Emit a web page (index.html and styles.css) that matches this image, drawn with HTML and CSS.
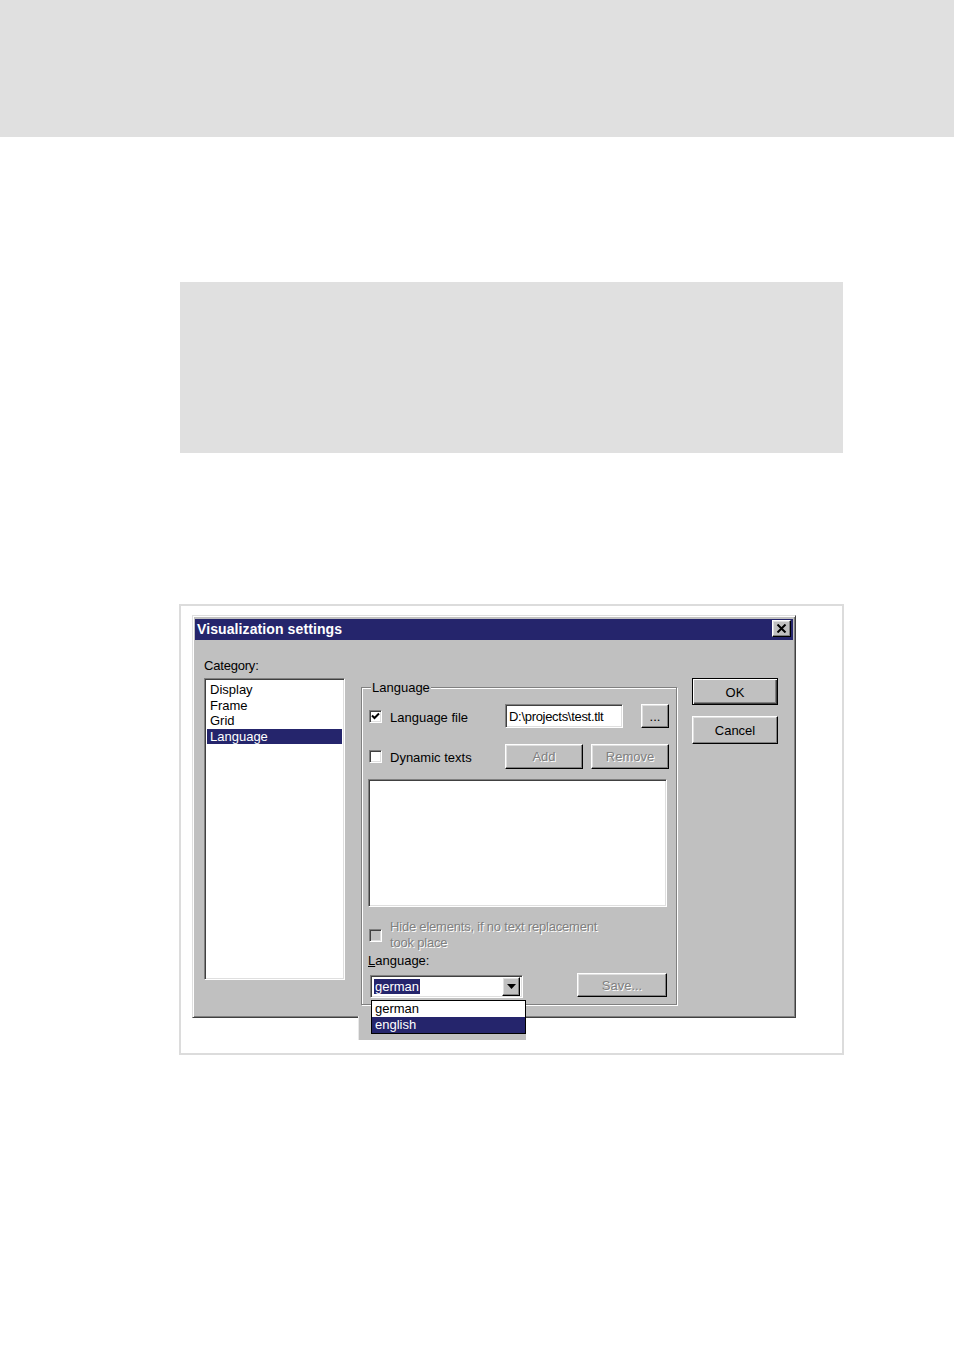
FILE: index.html
```html
<!DOCTYPE html>
<html>
<head>
<meta charset="utf-8">
<link rel="stylesheet" href="styles.css">
</head>
<body>
<div class="topband"></div>
<div class="graybox"></div>
<div class="frame">
  <div class="dialog">
    <div class="titlebar">
      <span class="title">Visualization settings</span>
      <span class="close raised"><svg width="11" height="9" viewBox="0 0 11 9"><path d="M1.5 0.5 L9.5 8.5 M9.5 0.5 L1.5 8.5" stroke="#000" stroke-width="2" fill="none"/></svg></span>
    </div>
    <div class="dbody">
      <div class="leftcol">
        <div class="lbl">Category:</div>
        <div class="catlist sunken">
          <div class="item">Display</div>
          <div class="item">Frame</div>
          <div class="item">Grid</div>
          <div class="item sel">Language</div>
        </div>
      </div>
      <div class="group">
        <span class="legend">Language</span>
        <div class="row r1">
          <div class="chkwrap"><span class="chk sunken"><svg width="9" height="9" viewBox="0 0 9 9"><path d="M1 3.5 L3.5 6 L8 1.5" stroke="#000" stroke-width="2" fill="none"/></svg></span><span>Language file</span></div>
          <div class="input sunken">D:\projects\test.tlt</div>
          <span class="spacer"></span>
          <div class="btn raised">...</div>
        </div>
        <div class="row r2">
          <div class="chkwrap"><span class="chk sunken"></span><span>Dynamic texts</span></div>
          <div class="btn raised disabled">Add</div>
          <span class="spacer2"></span>
          <div class="btn raised disabled">Remove</div>
        </div>
        <div class="biglist sunken"></div>
        <div class="hiderow">
          <span class="chk sunken grayed"></span>
          <span class="disabledtext hidetext">Hide elements, if no text replacement<br>took place</span>
        </div>
        <div class="langlbl"><u>L</u>anguage:</div>
        <div class="comborow">
          <div class="combo sunken">
            <span class="combotext"><span class="hl">german</span></span>
            <span class="dropbtn raised"><svg width="9" height="5" viewBox="0 0 9 5"><path d="M0 0 H9 L4.5 5 Z" fill="#000"/></svg></span>
          </div>
          <div class="btn raised disabled save">Save...</div>
        </div>
      </div>
      <div class="rightcol">
        <div class="btn raised okbtn">OK</div>
        <div class="btn raised cancelbtn">Cancel</div>
      </div>
    </div>
    <div class="dropshade"></div>
    <div class="droplist">
      <div class="ditem">german</div>
      <div class="ditem dsel">english</div>
    </div>
  </div>
</div>
</body>
</html>
```

FILE: styles.css
```css
* { box-sizing: border-box; }
html, body { margin: 0; padding: 0; background: #fff; }
body {
  width: 954px;
  height: 1350px;
  font-family: "Liberation Sans", Arial, sans-serif;
  font-size: 13px;
  color: #000;
}
.topband { height: 137px; background: #e0e0e0; }
.graybox {
  margin: 145px 0 0 180px;
  width: 663px;
  height: 171px;
  background: #e0e0e0;
}
.frame {
  margin: 151px 0 0 179px;
  width: 665px;
  height: 451px;
  border: 2px solid #dcdcdc;
  padding: 9px 0 0 11px;
}
.dialog {
  position: relative;
  width: 604px;
  height: 403px;
  background: #c0c0c0;
  border: 1px solid;
  border-color: #dfdfdf #404040 #404040 #dfdfdf;
  box-shadow: inset 1px 1px #fff, inset -1px -1px #808080;
  padding: 3px 2px 0 2px;
}
.raised {
  background: #c0c0c0;
  border: 1px solid;
  border-color: #fff #000 #000 #fff;
  box-shadow: inset -1px -1px #808080, inset 1px 1px #dfdfdf;
}
.sunken {
  background: #fff;
  border: 1px solid;
  border-color: #808080 #fff #fff #808080;
  box-shadow: inset 1px 1px #404040, inset -1px -1px #dfdfdf;
}
.titlebar {
  height: 21px;
  background: #25256c;
  display: flex;
  align-items: center;
  justify-content: space-between;
  padding: 0 2px 0 2px;
}
.title {
  color: #fff;
  font-weight: bold;
  font-size: 14px;
  letter-spacing: 0.1px;
  margin-top: -2px;
}
.close {
  width: 19px;
  height: 17px;
  display: flex;
  align-items: center;
  justify-content: center;
  margin-top: -2px;
}
.dbody {
  display: flex;
  align-items: flex-start;
  padding: 18px 0 0 9px;
}
.leftcol { width: 141px; }
.lbl { line-height: 16px; height: 16px; letter-spacing: -0.2px; }
.catlist {
  margin-top: 4px;
  height: 302px;
  padding: 3px 2px 2px 2px;
}
.item {
  height: 15.6px;
  line-height: 15.6px;
  padding-left: 3px;
  white-space: nowrap;
}
.item.sel { background: #25256c; color: #fff; }

.group {
  position: relative;
  margin: 29px 0 0 16px;
  width: 316px;
  height: 318px;
  border: 1px solid #808080;
  box-shadow: inset 1px 1px #fff, 1px 1px #fff;
  padding: 16px 0 0 7px;
}
.legend {
  position: absolute;
  top: -8px;
  left: 9px;
  padding: 0 1px;
  line-height: 16px;
  background: #c0c0c0;
}
.row { display: flex; align-items: center; }
.r1 { height: 24px; }
.r2 { height: 25px; margin-top: 16px; }
.chkwrap {
  width: 136px;
  display: flex;
  align-items: center;
  gap: 8px;
  white-space: nowrap;
}
.chkwrap span + span { padding-top: 2px; }
.chk {
  width: 13px;
  height: 13px;
  flex: none;
  display: flex;
  align-items: center;
  justify-content: center;
}
.chk.grayed { background: #c0c0c0; }
.input {
  width: 118px;
  height: 24px;
  line-height: 20px;
  padding: 2px 0 0 3px;
  white-space: nowrap;
  overflow: hidden;
  letter-spacing: -0.3px;
}
.spacer { width: 18px; }
.spacer2 { width: 8px; }
.btn {
  display: flex;
  align-items: center;
  justify-content: center;
  height: 24px;
  width: 28px;
  flex: none;
  padding-top: 1px;
}
.r2 .btn { width: 78px; height: 25px; padding-top: 0; padding-bottom: 1px; }
.disabled { color: #808080; text-shadow: 1px 1px #fff; }
.disabledtext { color: #808080; text-shadow: 1px 1px #fff; }
.biglist {
  margin: 10px 0 0 -1px;
  width: 299px;
  height: 128px;
}
.hiderow {
  display: flex;
  align-items: center;
  gap: 8px;
  margin-top: 12px;
}
.hidetext { line-height: 16px; letter-spacing: -0.2px; }
.langlbl { margin-top: 2px; line-height: 16px; margin-left: -1px; }
.comborow {
  display: flex;
  align-items: flex-start;
  margin-top: 6px;
}
.combo {
  margin-left: 1px;
  width: 153px;
  height: 23px;
  display: flex;
  align-items: center;
  padding: 2px;
}
.combotext { flex: 1; padding-left: 1px; line-height: 17px; }
.hl { background: #25256c; color: #fff; padding: 0 1px 0 1px; }
.dropbtn {
  width: 18px;
  height: 19px;
  display: flex;
  align-items: center;
  justify-content: center;
}
.save {
  margin: -2px 0 0 54px;
  width: 90px;
  height: 24px;
}
.rightcol {
  margin: 20px 0 0 15px;
  width: 86px;
}
.okbtn {
  width: 86px;
  height: 27px;
  border: 1px solid #000;
  box-shadow: inset 1px 1px #fff, inset -1px -1px #404040, inset -2px -2px #808080;
}
.cancelbtn { width: 86px; height: 28px; margin-top: 11px; }

.dropshade {
  position: absolute;
  left: 165px;
  top: 400px;
  width: 168px;
  height: 24px;
  background: #c0c0c0;
  border-left: 1px solid #e8e8e8;
}
.droplist {
  position: absolute;
  left: 178px;
  top: 384px;
  width: 155px;
  height: 34px;
  border: 1px solid #000;
  background: #fff;
}
.ditem { height: 16px; line-height: 16px; padding-left: 3px; }
.ditem.dsel { background: #25256c; color: #fff; }
```
